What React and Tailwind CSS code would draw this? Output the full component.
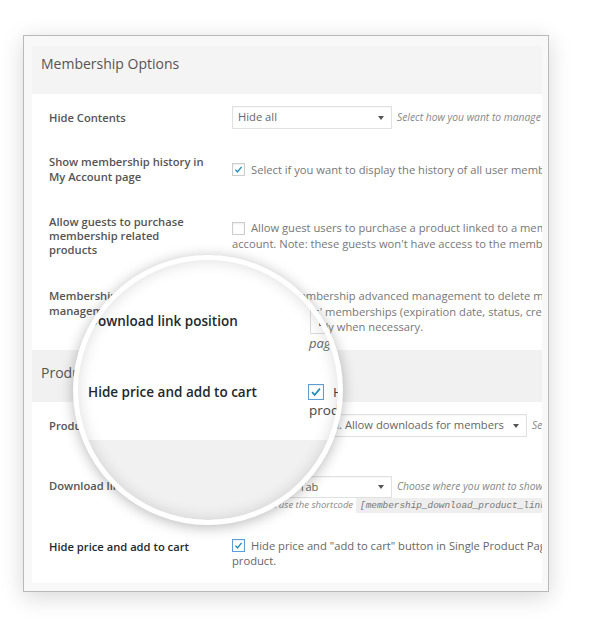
import React from 'react'

function Arrow() {
  return (
    <svg width="6" height="4" viewBox="0 0 6 4" className="shrink-0">
      <path d="M0 0h6L3 4z" fill="#555" />
    </svg>
  )
}

function Select({ className = '', children }) {
  return (
    <div className={`flex shrink-0 items-center justify-between bg-white border border-[#e1e1e1] shadow-[inset_0_1px_2px_rgba(0,0,0,0.04)] pl-[5px] pr-[7px] text-[11.2px] text-[#666] ${className}`}>
      <span className="whitespace-nowrap overflow-hidden">{children}</span>
      <Arrow />
    </div>
  )
}

function Box({ checked, blue, className = '' }) {
  return (
    <span className={`inline-flex shrink-0 items-center justify-center bg-white border shadow-[inset_0_1px_2px_rgba(0,0,0,0.08)] ${blue ? 'border-[#5b9dd9]' : 'border-[#cdcdcd]'} ${className}`}>
      {checked && (
        <svg viewBox="0 0 16 16" className="w-full h-full">
          <path d="M3.5 8.2l3 3.2 6-7.2" fill="none" stroke="#1e8cbe" strokeWidth="2" />
        </svg>
      )}
    </span>
  )
}

const label = 'w-[200px] shrink-0 pl-[17px] text-[11.2px] font-semibold text-[#555] whitespace-nowrap'
const desc = 'text-[11.2px] text-[#777] whitespace-nowrap'
const note = 'ml-[5px] text-[10.3px] italic text-[#888] whitespace-nowrap'

export default function App() {
  return (
    <div className="relative w-[602px] h-[634px] bg-white font-['Open_Sans',sans-serif] overflow-hidden">
      <div className="pt-[35px] pl-[23px]">
        <div className="w-[526px] border border-[#b9b9b9] bg-[#f8f8f8] pt-[10px] pl-[8px] pr-[6px] pb-[8px] shadow-[0_5px_22px_rgba(0,0,0,0.16)]">
          <div className="h-[48px] bg-[#f4f4f4] pl-[9px] pt-[10px] text-[14px] leading-[16px] text-[#555]">Membership Options</div>

          <div className="bg-white overflow-hidden">
            <div className="flex items-center h-[47px]">
              <div className={`${label} leading-[15px]`}>Hide Contents</div>
              <Select className="w-[160px] h-[23px]">Hide all</Select>
              <span className={note}>Select how you want to manage hidden contents</span>
            </div>

            <div className="flex items-center h-[56px]">
              <div className={`${label} leading-[15px]`}>Show membership history in<br />My Account page</div>
              <div className="flex items-center gap-[6px] leading-[15px]">
                <Box checked className="w-[13px] h-[13px]" />
                <span className={desc}>Select if you want to display the history of all user memberships in My Account page</span>
              </div>
            </div>

            <div className="flex items-center h-[78px]">
              <div className={`${label} leading-[14px]`}>Allow guests to purchase<br />membership related<br />products</div>
              <div className={`${desc} leading-[16px]`}>
                <div className="flex items-center gap-[6px]">
                  <Box className="w-[13px] h-[13px]" />
                  <span>Allow guest users to purchase a product linked to a membership without creating an</span>
                </div>
                <div>account. Note: these guests won't have access to the membership content</div>
              </div>
            </div>

            <div className="flex items-start h-[75px] pt-[13px]">
              <div className={`${label} leading-[15px]`}>Membership advanced<br />management</div>
              <div className={`${desc} leading-[15.5px]`}>
                <div className="flex items-center gap-[6px]">
                  <Box className="w-[13px] h-[13px]" />
                  <span>Enable membership advanced management to delete memberships and</span>
                </div>
                <div>and to edit users' memberships (expiration date, status, credits)</div>
                <div>Please use this only when necessary.</div>
              </div>
            </div>
          </div>

          <div className="h-[52px] bg-[#f1f1f1] pl-[9px] pt-[15px] text-[14px] leading-[16px] text-[#555]">Product Options</div>

          <div className="bg-white overflow-hidden h-[181px] flex flex-col">
            <div className="flex items-center h-[47px] shrink-0">
              <div className={`${label} leading-[15px]`}>Product downloads</div>
              <Select className="w-[295px] h-[23px]">Hide product for all. Allow downloads for members</Select>
              <span className={note}>Select how you want to manage downloads</span>
            </div>

            <div className="flex items-start h-[73px] shrink-0">
              <div className={`${label} leading-[15px] pt-[29px]`}>Download link position</div>
              <div className="pt-[27px]">
                <div className="flex items-center">
                  <Select className="w-[160px] h-[22px]">Downloads Tab</Select>
                  <span className={note}>Choose where you want to show the download link</span>
                </div>
                <div className="flex items-center h-[15px] text-[9.5px] italic text-[#888] whitespace-nowrap">
                  <span>or you can use the shortcode</span>
                  <span className="ml-[3px] bg-[#eeeeee] px-[4px] h-[15px] leading-[15px] font-['Liberation_Mono',monospace] text-[9.4px] text-[#777]">[membership_download_product_links]</span>
                </div>
              </div>
            </div>

            <div className="flex items-start">
              <div className={`${label} !text-[#23282d] leading-[15px] pt-[17px]`}>Hide price and add to cart</div>
              <div className={`${desc} !text-[#666] leading-[15px] pt-[16px]`}>
                <div className="flex items-center gap-[6px]">
                  <Box checked blue className="w-[13px] h-[13px]" />
                  <span>Hide price and "add to cart" button in Single Product Page for members of this</span>
                </div>
                <div>product.</div>
              </div>
            </div>
          </div>
        </div>
      </div>

      <div className="absolute left-[73px] top-[255px] w-[270px] h-[270px] rounded-full border-[5px] border-white overflow-hidden bg-[#f1f1f1] shadow-[0_2px_14px_rgba(0,0,0,0.28)]">
        <div className="h-[180px] bg-white">
          <div className="flex items-start pt-[48px]">
            <div className="w-[230px] shrink-0 pl-[10px] pt-[4px] text-[13.5px] leading-[18px] font-semibold text-[#23282d] whitespace-nowrap">Download link position</div>
            <div className="flex flex-col">
              <div className="ml-[2px] h-[26px] w-[200px] border border-[#dddddd] bg-white pl-[7px] flex items-center text-[13.5px] text-[#333] whitespace-nowrap">Links tab</div>
              <div className="ml-[1px] italic text-[13px] leading-[18px] text-[#666] whitespace-nowrap">page</div>
            </div>
          </div>
          <div className="flex items-start mt-[30px]">
            <div className="w-[230px] shrink-0 pl-[10px] text-[13.5px] leading-[20px] font-semibold text-[#23282d] whitespace-nowrap">Hide price and add to cart</div>
            <div className="flex flex-col text-[13.5px] leading-[20px] text-[#444] whitespace-nowrap">
              <div className="flex items-center h-[20px]">
                <Box checked blue className="w-[16px] h-[16px]" />
                <span className="ml-[9px]">Hide price</span>
              </div>
              <div className="ml-[1px] -mt-[2px]">product.</div>
            </div>
          </div>
        </div>
        <div className="absolute inset-0 rounded-full shadow-[inset_0_0_16px_rgba(0,0,0,0.14)]" />
      </div>
    </div>
  )
}
